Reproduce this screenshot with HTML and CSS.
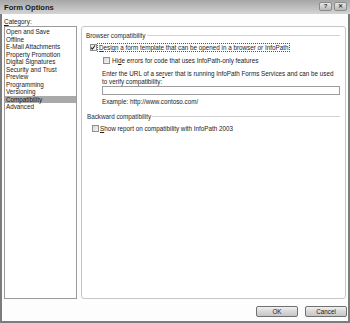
FILE: index.html
```html
<!DOCTYPE html>
<html>
<head>
<meta charset="utf-8">
<link rel="stylesheet" href="styles.css">
</head>
<body>
<div class="window">
  <div class="titlebar">
    <span class="title">Form Options</span>
    <span class="tbtns">
      <span class="tbtn">?</span>
      <span class="tbtn close">✕</span>
    </span>
  </div>
  <div class="content">
    <div class="label"><u>C</u>ategory:</div>
    <div class="spacer"></div>
    <ul class="listbox">
      <li>Open and Save</li>
      <li>Offline</li>
      <li>E-Mail Attachments</li>
      <li>Property Promotion</li>
      <li>Digital Signatures</li>
      <li>Security and Trust</li>
      <li>Preview</li>
      <li>Programming</li>
      <li>Versioning</li>
      <li class="sel">Compatibility</li>
      <li>Advanced</li>
    </ul>
    <div class="panel">
      <div class="group"><span>Browser compatibility</span><i></i></div>
      <div class="row r1">
        <span class="cb checked"><svg viewBox="0 0 7 7" width="7" height="7"><path d="M1.3 3.6 L2.8 5.4 L5.8 1.2" fill="none" stroke="#222" stroke-width="1.2"/></svg></span>
        <span class="focus"><u>D</u>esign a form template that can be opened in a browser or InfoPath</span>
      </div>
      <div class="row r2">
        <span class="cb"></span>
        <span>Hi<u>d</u>e errors for code that uses InfoPath-only features</span>
      </div>
      <div class="para">
        <div>Enter the URL of a se<u>r</u>ver that is running InfoPath Forms Services and can be used</div>
        <div>to verify compatibility:</div>
      </div>
      <div class="textbox"></div>
      <div class="example">Example: http://www.contoso.com/</div>
      <div class="group g2"><span>Backward compatibility</span><i></i></div>
      <div class="row r3">
        <span class="cb"></span>
        <span><u>S</u>how report on compatibility with InfoPath 2003</span>
      </div>
    </div>
  </div>
  <div class="footer">
    <span class="btn">OK</span>
    <span class="btn">Cancel</span>
  </div>
</div>
</body>
</html>
```
FILE: styles.css
```css
* { box-sizing: border-box; }
html, body { margin: 0; padding: 0; background: #fff; }
body {
  width: 350px;
  height: 323px;
  font-family: "Liberation Sans", Arial, sans-serif;
  font-size: 6.3px;
  color: #222;
}
u { text-decoration: underline; }
.window {
  width: 350px;
  height: 323px;
  border: 2px solid #7c7c7c;
  border-top: 0;
  background: #fdfdfd;
  display: flex;
  flex-direction: column;
}
.titlebar {
  height: 14px;
  margin: 0 -2px;
  padding: 0 3px 0 4px;
  background: linear-gradient(to bottom, #a6a6a6, #c6c6c6 70%, #d4d4d4);
  display: flex;
  align-items: center;
  justify-content: space-between;
}
.title {
  font-weight: bold;
  font-size: 7.6px;
  color: #1a1a1a;
}
.tbtns { display: flex; gap: 2px; align-self: flex-start; margin-top: 2px; }
.tbtn {
  width: 13px;
  height: 9px;
  border: 1px solid #8c8c8c;
  border-radius: 2px;
  background: linear-gradient(to bottom, #e6e6e6, #b9b9b9);
  font-size: 6px;
  line-height: 7px;
  text-align: center;
  color: #333;
  font-weight: bold;
}
.tbtn.close { font-size: 5.5px; }
.content {
  display: grid;
  grid-template-columns: 73px 265px;
  grid-template-rows: 10px 273px;
  column-gap: 4px;
  padding: 2px 0 0 2px;
}
.label { font-size: 6.4px; line-height: 10px; padding-top: 1px; }
.listbox {
  margin: 0;
  padding: 1px 0 0 0;
  list-style: none;
  border: 1px solid #9a9a9a;
  background: #fff;
}
.listbox li {
  line-height: 7.5px;
  height: 7.5px;
  padding-left: 1px;
  white-space: nowrap;
}
.listbox li.sel { background: #a9a9a9; color: #111; }
.panel {
  border: 1px solid #c6c6c6;
  border-radius: 3px;
  background: #fff;
  padding: 4px 5px 0 4px;
}
.group {
  display: flex;
  align-items: center;
  gap: 1px;
  height: 8px;
  color: #2a2a2a;
}
.group i {
  flex: 1;
  height: 2px;
  border-top: 1px solid #d2d2d2;
  border-bottom: 1px solid #fff;
  margin-top: 1px;
}
.row { display: flex; align-items: center; gap: 1px; white-space: nowrap; }
.cb {
  width: 7px;
  height: 7px;
  border: 1px solid #8e8e8e;
  background: linear-gradient(135deg, #d8d8d8, #f5f5f5);
  display: inline-flex;
  flex: none;
}
.cb svg { display: block; margin: -1px 0 0 -1px; }
.cb.checked { background: linear-gradient(135deg, #e2e2e2, #fafafa); }
.focus { outline: 1px dotted #555; outline-offset: 0; padding: 0 1px; }
.r1 { margin: 5px 0 0 4px; }
.r2 { margin: 6px 0 0 17px; gap: 2px; }
.para { margin: 6px 0 0 16px; white-space: nowrap; }
.para div { line-height: 7.5px; height: 7.5px; }
.textbox {
  margin: 1px 0 0 16px;
  height: 9px;
  border: 1px solid #9c9c9c;
  background: #fff;
}
.example { margin: 3px 0 0 16px; line-height: 7px; }
.g2 { margin-top: 7px; padding-left: 1px; }
.r3 { margin: 5px 0 0 6px; }
.footer {
  display: flex;
  justify-content: flex-end;
  gap: 7px;
  padding: 7px 1px 0 0;
}
.btn {
  width: 42px;
  height: 11px;
  border: 1px solid #707070;
  border-radius: 2px;
  background: linear-gradient(to bottom, #f0f0f0, #d8d8d8 50%, #c6c6c6);
  font-size: 6.3px;
  line-height: 9px;
  text-align: center;
  color: #222;
}
```
